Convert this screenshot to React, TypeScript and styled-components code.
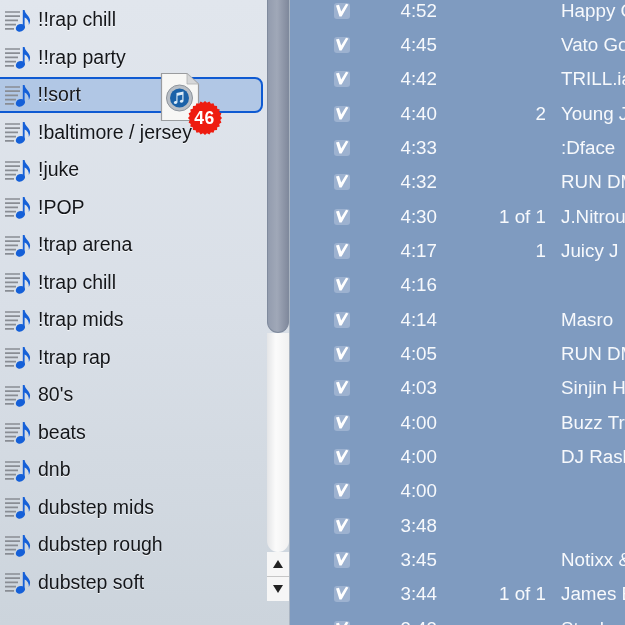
import React from "react";
import styled, { createGlobalStyle } from "styled-components";

const GlobalStyle = createGlobalStyle`
  html, body {
    margin: 0;
    padding: 0;
    background: #7f9bc0;
  }
`;

const Window = styled.div`
  position: relative;
  display: flex;
  width: 625px;
  height: 625px;
  overflow: hidden;
  filter: blur(0.45px);
`;

const Sidebar = styled.div`
  display: flex;
  width: 289px;
  flex-shrink: 0;
  background: linear-gradient(to bottom, #e1e6ed 0%, #d9dfe7 50%, #ccd4dc 100%);
  border-right: 1px solid #a9b4c2;
`;

const PlaylistList = styled.div`
  flex: 1;
  display: flex;
  flex-direction: column;
  gap: 1.5px;
  padding: 1.5px 4px 0 0;
  min-width: 0;
`;

const PlaylistRow = styled.div<{ $selected?: boolean }>`
  display: flex;
  align-items: center;
  flex-shrink: 0;
  box-sizing: border-box;
  height: 36px;
  gap: 5px;
  margin-left: ${(p) => (p.$selected ? "-10px" : "0")};
  padding-left: ${(p) => (p.$selected ? "10.5px" : "3px")};
  border: ${(p) => (p.$selected ? "2.5px solid #0e5ad2" : "none")};
  border-radius: 8px;
  background: ${(p) => (p.$selected ? "#b1c7e5" : "transparent")};
`;

const PlaylistName = styled.span`
  font-family: "Liberation Sans", Arial, sans-serif;
  font-size: 19.5px;
  color: #14161a;
  white-space: nowrap;
  text-shadow: 0 1px 0 rgba(255, 255, 255, 0.75);
`;

const Scrollbar = styled.div`
  width: 22px;
  flex-shrink: 0;
  display: flex;
  flex-direction: column;
`;

const Thumb = styled.div`
  height: 333px;
  box-sizing: border-box;
  flex-shrink: 0;
  border: 1.5px solid #7f8a9d;
  border-top: none;
  border-radius: 0 0 11px 11px;
  background: linear-gradient(to right, #939cae, #a0a8b8 45%, #818a9d);
`;

const Track = styled.div`
  flex: 1;
  background: linear-gradient(to right, #e4e5e7, #fbfbfb 40%, #f1f1f1);
  border-radius: 0 0 11px 11px;
`;

const ArrowButton = styled.div<{ $down?: boolean }>`
  height: 24px;
  display: flex;
  align-items: center;
  justify-content: center;
  background: #f6f6f6;
  border-top: ${(p) => (p.$down ? "1px solid #c6c6c6" : "none")};

  &::after {
    content: "";
    border-left: 5px solid transparent;
    border-right: 5px solid transparent;
    border-top: ${(p) => (p.$down ? "8px solid #222" : "none")};
    border-bottom: ${(p) => (p.$down ? "none" : "8px solid #222")};
  }
`;

const ScrollEnd = styled.div`
  height: 24px;
  flex-shrink: 0;
`;

const TrackPanel = styled.div`
  flex: 1;
  min-width: 0;
  display: flex;
  flex-direction: column;
  margin-top: -6.5px;
  background: #7f9bc0;
`;

const TrackRow = styled.div`
  display: grid;
  grid-template-columns: 59px 88px 109px 1fr;
  align-items: center;
  flex-shrink: 0;
  height: 34.33px;
  font-family: "Liberation Sans", Arial, sans-serif;
  font-size: 18.8px;
  color: #f7f9fc;
  white-space: nowrap;
`;

const CheckCell = styled.div`
  display: flex;
  justify-content: flex-end;
`;

const CheckBox = styled.div`
  width: 16px;
  height: 16px;
  margin-right: -1px;
  border-radius: 3px;
  background: #9db2d0;
  display: flex;
  align-items: center;
  justify-content: center;
`;

const Time = styled.div`
  text-align: right;
`;

const TrackNumber = styled.div`
  text-align: right;
`;

const Artist = styled.div`
  padding-left: 15px;
  overflow: hidden;
`;

const DragGhost = styled.div`
  position: absolute;
  left: 160px;
  top: 72px;
  width: 62px;
  height: 64px;
`;

const Badge = styled.div`
  position: absolute;
  left: 27.5px;
  top: 29px;
  width: 34px;
  height: 34px;
  display: flex;
  align-items: center;
  justify-content: center;
  font-family: "Liberation Sans", Arial, sans-serif;
  font-size: 17.5px;
  font-weight: bold;
  letter-spacing: 0.6px;
  color: #fff;

  svg {
    position: absolute;
    inset: 0;
  }

  span {
    position: relative;
  }
`;

const playlists = [
  "!!rap chill",
  "!!rap party",
  "!!sort",
  "!baltimore / jersey",
  "!juke",
  "!POP",
  "!trap arena",
  "!trap chill",
  "!trap mids",
  "!trap rap",
  "80's",
  "beats",
  "dnb",
  "dubstep mids",
  "dubstep rough",
  "dubstep soft",
];

const tracks = [
  { time: "4:52", num: "", artist: "Happy G" },
  { time: "4:45", num: "", artist: "Vato Go" },
  { time: "4:42", num: "", artist: "TRILL.ia" },
  { time: "4:40", num: "2", artist: "Young J" },
  { time: "4:33", num: "", artist: ":Dface" },
  { time: "4:32", num: "", artist: "RUN DM" },
  { time: "4:30", num: "1 of 1", artist: "J.Nitrou" },
  { time: "4:17", num: "1", artist: "Juicy J" },
  { time: "4:16", num: "", artist: "" },
  { time: "4:14", num: "", artist: "Masro" },
  { time: "4:05", num: "", artist: "RUN DM" },
  { time: "4:03", num: "", artist: "Sinjin H" },
  { time: "4:00", num: "", artist: "Buzz Tri" },
  { time: "4:00", num: "", artist: "DJ Rash" },
  { time: "4:00", num: "", artist: "" },
  { time: "3:48", num: "", artist: "" },
  { time: "3:45", num: "", artist: "Notixx &" },
  { time: "3:44", num: "1 of 1", artist: "James B" },
  { time: "3:43", num: "", artist: "Steph" },
];

const PlaylistIcon = () => (
  <svg width="30" height="26" viewBox="0 0 30 26" style={{ flexShrink: 0 }}>
    <path
      d="M2 5h15M2 9.2h15M2 13.4h13M2 17.6h11M2 21.8h9"
      stroke="#898d94"
      strokeWidth="1.7"
    />
    <g fill="#1560d8">
      <ellipse cx="17.4" cy="20.8" rx="4.7" ry="3.7" transform="rotate(-20 17.4 20.8)" />
      <path d="M19.8 3h1.8c.4 3.6 4 5.4 5.2 9 .6 2 .2 4.2-1 6 .4-3.6-1.6-6.6-4.2-7.6V21h-1.8z" />
    </g>
  </svg>
);

const CheckMark = () => (
  <svg width="16" height="16" viewBox="0 0 16 16">
    <path d="M2 2.6 5 1.8 7.2 8.6 12 .8 14.4 1.6 7.6 13.4H5.4z" fill="#fff" />
  </svg>
);

const DocumentIcon = () => (
  <svg width="40" height="52" viewBox="0 0 40 52">
    <path
      d="M1.5 1.5H27L38.5 12V48.5H1.5z"
      fill="#f7f7f5"
      stroke="#9a9c9f"
      strokeWidth="1.2"
    />
    <path d="M27 1.5V12H38.5z" fill="#d6d7d8" stroke="#b0b1b3" strokeWidth="0.8" />
    <circle cx="19.5" cy="26" r="13" fill="#b9bfc6" stroke="#8f959c" strokeWidth="1" />
    <circle cx="19.5" cy="26" r="9.5" fill="#1b62a8" />
    <path
      d="M16.5 21 23.5 19.5v9.2c0 1.2-1 2-2.2 2-.9 0-1.5-.5-1.5-1.2 0-1 1-1.7 2-1.7l.5.1v-5.2l-4.8 1v6.3c0 1.2-1 2-2.2 2-.9 0-1.5-.5-1.5-1.2 0-1 1-1.7 2-1.7l.5.1z"
      fill="#dcecf8"
    />
  </svg>
);

const badgeSpikes = () => {
  const points: string[] = [];
  for (let i = 0; i < 48; i++) {
    const r = i % 2 === 0 ? 17 : 15.4;
    const a = (i / 48) * Math.PI * 2;
    points.push(`${17 + r * Math.cos(a)},${17 + r * Math.sin(a)}`);
  }
  return points.join(" ");
};

const App: React.FC = () => {
  return (
    <Window>
      <GlobalStyle />
      <Sidebar>
        <PlaylistList>
          {playlists.map((name) => (
            <PlaylistRow key={name} $selected={name === "!!sort"}>
              <PlaylistIcon />
              <PlaylistName>{name}</PlaylistName>
            </PlaylistRow>
          ))}
        </PlaylistList>
        <Scrollbar>
          <Thumb />
          <Track />
          <ArrowButton />
          <ArrowButton $down />
          <ScrollEnd />
        </Scrollbar>
      </Sidebar>
      <TrackPanel>
        {tracks.map((t, i) => (
          <TrackRow key={i}>
            <CheckCell>
              <CheckBox>
                <CheckMark />
              </CheckBox>
            </CheckCell>
            <Time>{t.time}</Time>
            <TrackNumber>{t.num}</TrackNumber>
            <Artist>{t.artist}</Artist>
          </TrackRow>
        ))}
      </TrackPanel>
      <DragGhost>
        <DocumentIcon />
        <Badge>
          <svg width="34" height="34" viewBox="0 0 34 34">
            <polygon points={badgeSpikes()} fill="#ee1c10" />
          </svg>
          <span>46</span>
        </Badge>
      </DragGhost>
    </Window>
  );
};

export default App;
